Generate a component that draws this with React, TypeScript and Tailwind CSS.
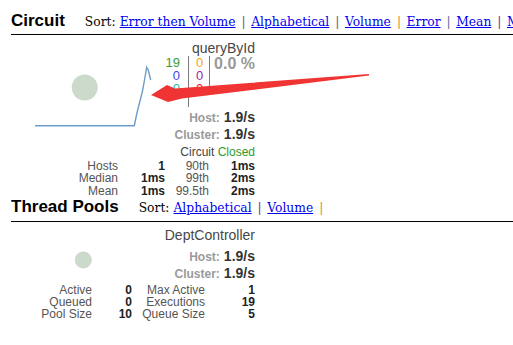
import React from "react";

const sepColorsCircuit = ["#5a5a7a", "#5a5a7a", "#d08a3a", "#5a6a9a", "#7a2a8a", "#7a7a7a"];

function SortBar({ links, seps }: { links: string[]; seps: string[] }) {
  return (
    <div className="ml-[20px] flex items-baseline whitespace-nowrap font-['DejaVu_Serif',serif] text-[12.3px] text-black">
      <span>Sort:</span>
      <span className="w-[4px]" />
      {links.map((l, i) => (
        <React.Fragment key={l}>
          <a href="#" className="text-[#0000ee] underline">
            {l}
          </a>
          {i < seps.length && (
            <span className="ml-[6px] mr-[5.5px]" style={{ color: seps[i] }}>
              |
            </span>
          )}
        </React.Fragment>
      ))}
    </div>
  );
}

function Header({ title, children, pt }: { title: string; children: React.ReactNode; pt: string }) {
  return (
    <div className={`ml-[11px] w-[502px] overflow-hidden border-b border-black ${pt}`}>
      <div className="flex h-[20px] items-baseline whitespace-nowrap">
        <h2 className="text-[17px] font-bold leading-[20px] text-black">{title}</h2>
        {children}
      </div>
    </div>
  );
}

export default function App() {
  return (
    <div className="relative h-[345px] w-[513px] overflow-hidden bg-white font-['Liberation_Sans',Arial,sans-serif] text-[#333]">
      {/* Circuit header */}
      <Header title="Circuit" pt="pt-[11px] pb-[3px]">
        <SortBar
          links={["Error then Volume", "Alphabetical", "Volume", "Error", "Mean", "Median"]}
          seps={sepColorsCircuit}
        />
      </Header>

      {/* Circuit card */}
      <div className="relative ml-[11px] h-[162px] w-[245px] pt-[5px]">
        <svg className="absolute left-0 top-0" width="245" height="162">
          <circle cx="73.7" cy="52.5" r="13" fill="#cbdaca" />
          <path
            d="M24 90.7 L123.3 90.7 L124.3 86 L125.8 78.5 L128.5 68 L131.5 56 L134 42 L135.7 32.3 L137.2 35 L139.7 45"
            fill="none"
            stroke="#6d9ccb"
            strokeWidth="1.4"
          />
        </svg>
        <div className="relative flex flex-col items-end pr-[1px]">
          <div className="text-[14px] leading-[16px] text-[#474747]">queryById</div>
          <div className="flex h-[51px]">
            <div className="h-[51px] w-[40px] border-r border-[#7a7a7a] pr-[8px] text-right text-[13px] leading-[13px]">
              <div className="text-[#3a9a3a]">19</div>
              <div className="text-[#4646f0]">0</div>
              <div className="text-[#1ec0a0]">0</div>
            </div>
            <div className="h-[39px] w-[21px] border-r border-[#7a7a7a] pl-[1px] text-center text-[13px] leading-[13px]">
              <div className="text-[#f5a623]">0</div>
              <div className="text-[#9a2aa0]">0</div>
              <div className="text-[#ee2020]">0</div>
            </div>
            <div className="w-[45px] pt-[1px] text-right text-[16px] font-bold leading-[13px] text-[#999]">0.0 %</div>
          </div>
          <div className="mt-[2px] flex h-[17px] items-baseline gap-[4px] leading-[17px]">
            <span className="text-[12px] font-bold text-[#9a9a9a]">Host:</span>
            <span className="text-[14px] font-bold text-[#333]">1.9/s</span>
          </div>
          <div className="flex h-[17px] items-baseline gap-[4px] leading-[17px]">
            <span className="text-[12px] font-bold text-[#9a9a9a]">Cluster:</span>
            <span className="text-[14px] font-bold text-[#333]">1.9/s</span>
          </div>
          <div className="mt-[1.5px] h-[14px] text-[12px] leading-[14px] text-[#444]">
            Circuit <span className="text-[#2e9a2e]">Closed</span>
          </div>
          <div className="mt-[1px] grid grid-cols-[60px_47px_44px_46px] text-right text-[12px] leading-[12.5px]">
            <span className="text-[#555]">Hosts</span>
            <span className="font-bold text-[#222]">1</span>
            <span className="text-[#555]">90th</span>
            <span className="font-bold text-[#222]">1ms</span>
            <span className="text-[#555]">Median</span>
            <span className="font-bold text-[#222]">1ms</span>
            <span className="text-[#555]">99th</span>
            <span className="font-bold text-[#222]">2ms</span>
            <span className="text-[#555]">Mean</span>
            <span className="font-bold text-[#222]">1ms</span>
            <span className="text-[#555]">99.5th</span>
            <span className="font-bold text-[#222]">2ms</span>
          </div>
        </div>
      </div>

      {/* Thread Pools header */}
      <Header title="Thread Pools" pt="pt-0 pb-[4px]">
        <SortBar links={["Alphabetical", "Volume"]} seps={["#7a2a8a", "#c8923a"]} />
      </Header>

      {/* Thread pool card */}
      <div className="relative ml-[11px] h-[120px] w-[245px] pt-[5px]">
        <svg className="absolute left-0 top-0" width="245" height="120">
          <circle cx="72.3" cy="38" r="8.5" fill="#cbdaca" />
        </svg>
        <div className="relative flex flex-col items-end pr-[1px]">
          <div className="text-[14px] leading-[16px] text-[#474747]">DeptController</div>
          <div className="mt-[5px] flex h-[17px] items-baseline gap-[4px] leading-[17px]">
            <span className="text-[12px] font-bold text-[#9a9a9a]">Host:</span>
            <span className="text-[14px] font-bold text-[#333]">1.9/s</span>
          </div>
          <div className="flex h-[17px] items-baseline gap-[4px] leading-[17px]">
            <span className="text-[12px] font-bold text-[#9a9a9a]">Cluster:</span>
            <span className="text-[14px] font-bold text-[#333]">1.9/s</span>
          </div>
          <div className="mt-[2px] grid grid-cols-[60px_40px_73px_50px] text-right text-[12px] leading-[12px]">
            <span className="text-[#555]">Active</span>
            <span className="font-bold text-[#222]">0</span>
            <span className="text-[#555]">Max Active</span>
            <span className="font-bold text-[#222]">1</span>
            <span className="text-[#555]">Queued</span>
            <span className="font-bold text-[#222]">0</span>
            <span className="text-[#555]">Executions</span>
            <span className="font-bold text-[#222]">19</span>
            <span className="text-[#555]">Pool Size</span>
            <span className="font-bold text-[#222]">10</span>
            <span className="text-[#555]">Queue Size</span>
            <span className="font-bold text-[#222]">5</span>
          </div>
        </div>
      </div>

      {/* Red annotation arrow */}
      <svg className="pointer-events-none absolute left-0 top-0" width="513" height="345">
        <polygon
          points="151,95 167,85 175,88.5 369,74 369,75.6 182,98.5 168,102"
          fill="#f03434"
        />
      </svg>
    </div>
  );
}
